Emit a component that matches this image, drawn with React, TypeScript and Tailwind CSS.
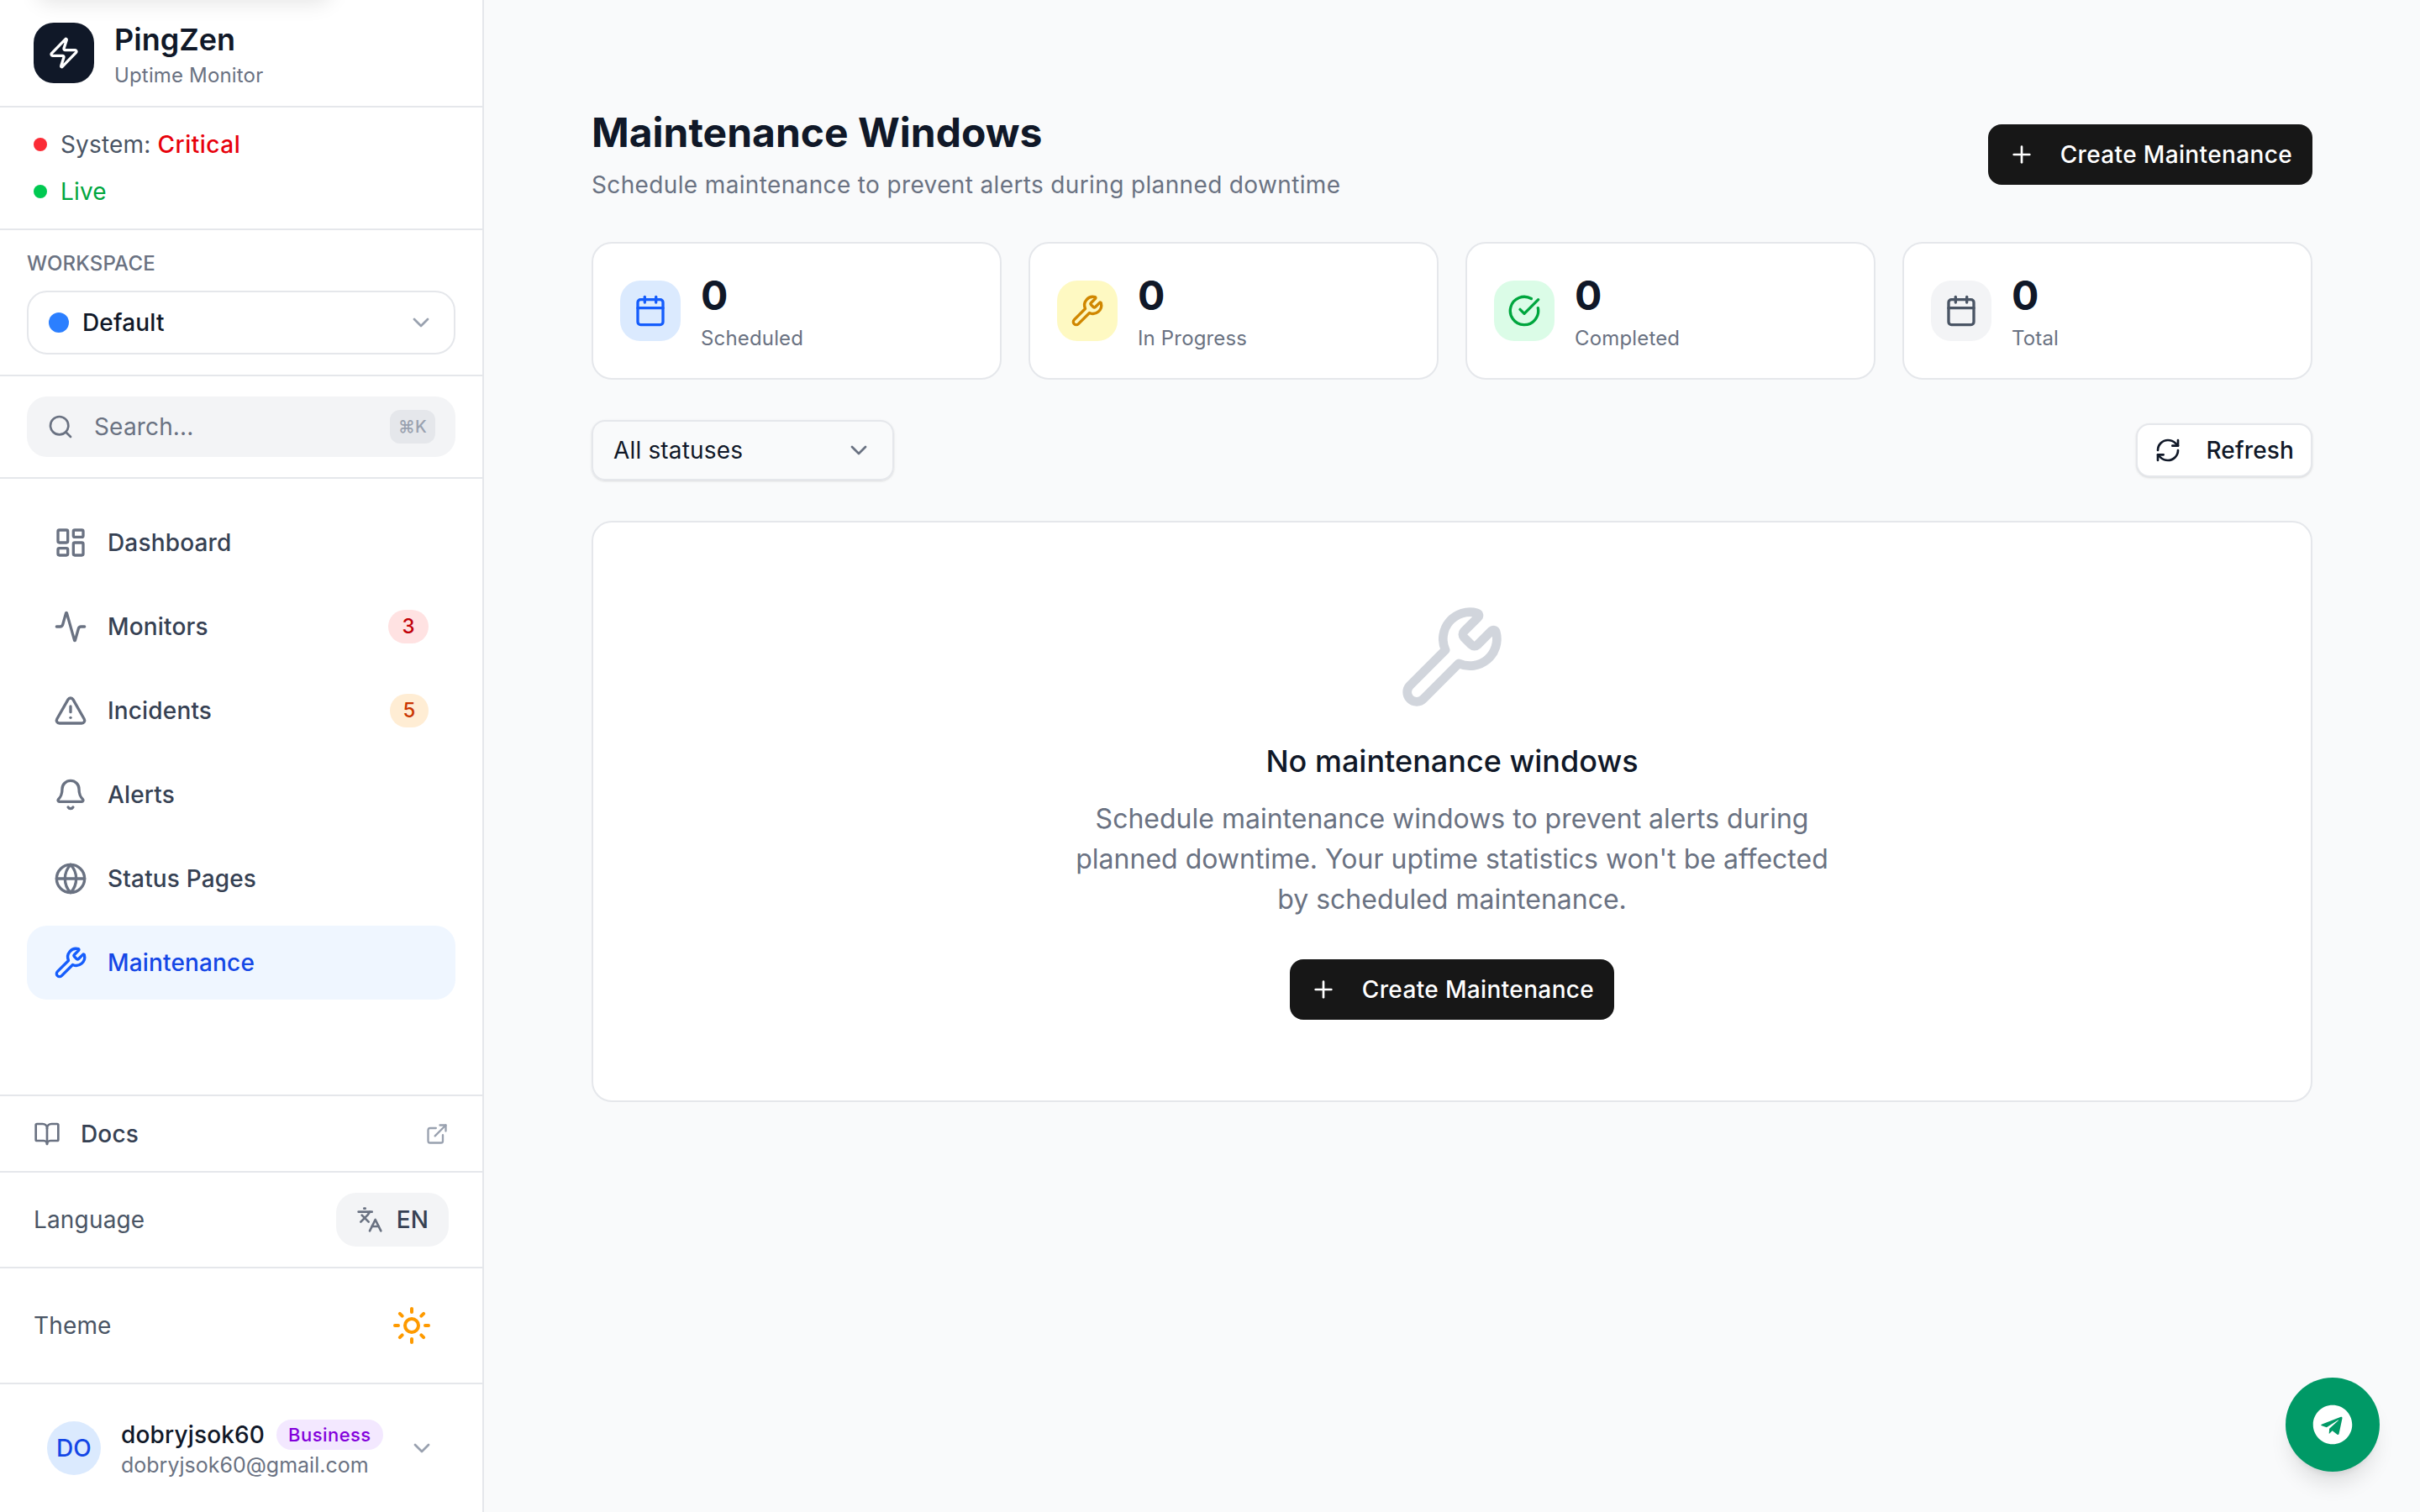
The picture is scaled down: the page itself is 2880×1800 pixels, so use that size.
import {
	Activity,
	Bell,
	BookOpen,
	Calendar,
	CircleCheckBig,
	ChevronDown,
	ExternalLink,
	Globe,
	Languages,
	LayoutDashboard,
	Plus,
	RefreshCw,
	Search,
	Sun,
	TriangleAlert,
	Wrench,
	Zap,
} from "lucide-react"
import { FaTelegram } from "react-icons/fa"

const navItems = [
	{ label: "Dashboard", icon: LayoutDashboard },
	{ label: "Monitors", icon: Activity, badge: "3", badgeClass: "bg-red-100 text-red-700 w-[48px]" },
	{ label: "Incidents", icon: TriangleAlert, badge: "5", badgeClass: "bg-orange-100 text-orange-700 w-[46px]" },
	{ label: "Alerts", icon: Bell },
	{ label: "Status Pages", icon: Globe },
	{ label: "Maintenance", icon: Wrench, active: true },
]

const stats = [
	{ label: "Scheduled", icon: Calendar, boxClass: "bg-blue-100", iconClass: "text-blue-600" },
	{ label: "In Progress", icon: Wrench, boxClass: "bg-yellow-100", iconClass: "text-yellow-600" },
	{ label: "Completed", icon: CircleCheckBig, boxClass: "bg-green-100", iconClass: "text-green-600" },
	{ label: "Total", icon: Calendar, boxClass: "bg-gray-100", iconClass: "text-gray-600" },
]

const CreateButton = () => (
	<button className="flex h-[72px] items-center gap-[30px] rounded-2xl bg-[#171717] px-[24px] text-[28px] font-medium tracking-[0.36px] text-white">
		<Plus className="h-[32px] w-[32px]" />
		Create Maintenance
	</button>
)

const Sidebar = () => (
	<aside className="relative flex h-full w-[576px] shrink-0 flex-col overflow-hidden border-r-2 border-gray-200 bg-white">
		<div className="absolute -top-[44px] left-[44px] h-[44px] w-[350px] rounded-2xl shadow-[0_4px_24px_rgba(0,0,0,0.1)]" />

		<div className="flex h-[128px] shrink-0 items-center gap-[24px] border-b-2 border-gray-200 px-[40px]">
			<div className="flex h-[72px] w-[72px] items-center justify-center rounded-3xl bg-gray-900 text-white">
				<Zap className="h-[40px] w-[40px]" />
			</div>
			<div className="mt-[3px]">
				<div className="text-[36px] leading-[48px] font-semibold tracking-normal text-gray-900">PingZen</div>
				<div className="mt-[3px] text-[24px] leading-[32px] text-gray-500">Uptime Monitor</div>
			</div>
		</div>

		<div className="flex h-[146px] shrink-0 flex-col gap-[16px] border-b-2 border-gray-200 px-[40px] py-[24px] text-[28px] leading-[40px]">
			<div className="flex items-center gap-[16px]">
				<span className="h-[16px] w-[16px] rounded-full bg-red-500" />
				<span className="text-gray-600">
					System: <span className="font-medium tracking-[0.5px] text-red-600">Critical</span>
				</span>
			</div>
			<div className="flex items-center gap-[16px]">
				<span className="h-[16px] w-[16px] rounded-full bg-green-500" />
				<span className="text-green-600">Live</span>
			</div>
		</div>

		<div className="h-[174px] shrink-0 border-b-2 border-gray-200 px-[32px] pt-[24px]">
			<div className="mb-[16px] text-[24px] leading-[32px] font-medium text-gray-500">WORKSPACE</div>
			<div className="flex h-[76px] items-center rounded-3xl border-2 border-gray-200 pr-[23px] pl-[24px]">
				<span className="h-[24px] w-[24px] rounded-full bg-blue-500" />
				<span className="ml-[16px] flex-1 text-[28px] font-medium text-gray-900">Default</span>
				<ChevronDown className="h-[32px] w-[32px] text-gray-400" />
			</div>
		</div>

		<div className="h-[122px] shrink-0 border-b-2 border-gray-200 px-[32px] pt-[24px]">
			<div className="flex h-[72px] items-center rounded-3xl bg-gray-100 pr-[24px] pl-[24px]">
				<Search className="h-[32px] w-[32px] text-gray-500" />
				<span className="ml-[24px] flex-1 text-[28px] text-gray-500">Search...</span>
				<span className="flex h-[40px] w-[54px] items-center justify-center rounded-xl bg-gray-200 text-[20px] font-medium text-gray-400">
					⌘K
				</span>
			</div>
		</div>

		<nav className="flex flex-1 flex-col gap-[12px] px-[32px] pt-[32px]">
			{navItems.map((item) => (
				<div
					key={item.label}
					className={`flex h-[88px] items-center gap-[24px] rounded-3xl pr-[32px] pl-[32px] ${
						item.active ? "bg-blue-50" : ""
					}`}
				>
					<item.icon className={`h-[40px] w-[40px] ${item.active ? "text-blue-600" : "text-gray-500"}`} />
					<span
						className={`flex-1 text-[28px] font-medium ${item.active ? "text-blue-700" : "text-gray-700"}`}
					>
						{item.label}
					</span>
					{item.badge && (
						<span
							className={`flex h-[40px] items-center justify-center rounded-full text-[24px] font-medium ${item.badgeClass}`}
						>
							{item.badge}
						</span>
					)}
				</div>
			))}
		</nav>

		<div className="flex h-[91px] shrink-0 items-center border-t-2 border-gray-200 pr-[40px] pl-[40px]">
			<BookOpen className="h-[32px] w-[32px] text-gray-500" />
			<span className="ml-[24px] flex-1 text-[28px] font-medium text-gray-700">Docs</span>
			<ExternalLink className="h-[28px] w-[28px] text-gray-400" />
		</div>

		<div className="flex h-[114px] shrink-0 items-center justify-between border-t-2 border-gray-200 pr-[40px] pl-[40px]">
			<span className="text-[28px] text-gray-600">Language</span>
			<div className="flex h-[64px] w-[134px] items-center justify-center gap-[16px] rounded-3xl bg-gray-100">
				<Languages className="h-[32px] w-[32px] text-gray-500" />
				<span className="text-[28px] font-medium text-gray-700">EN</span>
			</div>
		</div>

		<div className="flex h-[138px] shrink-0 items-center justify-between border-t-2 border-gray-200 pr-[60px] pl-[40px]">
			<span className="text-[28px] text-gray-600">Theme</span>
			<Sun className="h-[48px] w-[48px] text-amber-500" />
		</div>

		<div className="flex h-[154px] shrink-0 items-center border-t-2 border-gray-200 pr-[56px] pl-[56px]">
			<div className="flex h-[64px] w-[64px] items-center justify-center rounded-full bg-blue-100 text-[28px] font-medium text-blue-700">
				DO
			</div>
			<div className="ml-[24px] flex-1 pt-[4px]">
				<div className="flex h-[36px] items-center gap-[14px]">
					<span className="text-[28px] font-medium text-gray-900">dobryjsok60</span>
					<span className="flex h-[36px] items-center rounded-full bg-purple-100 px-[14px] text-[22px] font-medium tracking-[0.45px] text-purple-700">
						Business
					</span>
				</div>
				<div className="text-[25px] leading-[36px] tracking-normal text-gray-500">dobryjsok60@gmail.com</div>
			</div>
			<ChevronDown className="h-[32px] w-[32px] text-gray-400" />
		</div>
	</aside>
)

const App = () => {
	return (
		<div className="flex h-screen w-full overflow-hidden bg-gray-50 tracking-[0.01em] [font-family:Inter,sans-serif]">
			<Sidebar />

			<main className="flex-1 px-[128px] pt-[126px]">
				<div className="flex items-start justify-between">
					<div>
						<h1 className="text-[48px] leading-[64px] font-bold tracking-normal text-gray-900">
							Maintenance Windows
						</h1>
						<p className="mt-[6px] text-[28px] leading-[48px] tracking-[0.36px] text-gray-500">
							Schedule maintenance to prevent alerts during planned downtime
						</p>
					</div>
					<div className="mt-[22px]">
						<CreateButton />
					</div>
				</div>

				<div className="mt-[44px] grid grid-cols-4 gap-[32px]">
					{stats.map((stat) => (
						<div
							key={stat.label}
							className="flex h-[164px] items-center gap-[24px] rounded-3xl border-2 border-gray-200 bg-white px-[32px]"
						>
							<div className={`flex h-[72px] w-[72px] items-center justify-center rounded-3xl ${stat.boxClass}`}>
								<stat.icon className={`h-[40px] w-[40px] ${stat.iconClass}`} />
							</div>
							<div>
								<div className="text-[48px] leading-[66px] font-bold tracking-normal text-gray-900">0</div>
								<div className="text-[24px] leading-[36px] text-gray-500">{stat.label}</div>
							</div>
						</div>
					))}
				</div>

				<div className="mt-[48px] flex h-[72px] items-center justify-between">
					<div className="flex h-[72px] w-[360px] items-center justify-between rounded-2xl border-2 border-gray-200 pr-[24px] pl-[24px] shadow-sm">
						<span className="text-[28px] text-gray-900">All statuses</span>
						<ChevronDown className="h-[32px] w-[32px] text-gray-500" />
					</div>
					<button className="flex h-[64px] items-center gap-[29px] rounded-2xl border-2 border-gray-200 bg-white px-[20px] text-[28px] font-medium text-gray-900 shadow-sm">
						<RefreshCw className="h-[32px] w-[32px]" />
						Refresh
					</button>
				</div>

				<div className="mt-[48px] flex flex-col items-center rounded-3xl border-2 border-gray-200 bg-white py-[96px]">
					<Wrench className="h-[128px] w-[128px] text-gray-300" />
					<h3 className="mt-[32px] text-[36px] leading-[56px] font-medium tracking-normal text-gray-900">
						No maintenance windows
					</h3>
					<p className="mt-[17px] w-[896px] text-center text-[32px] leading-[48px] tracking-normal text-gray-500">
						Schedule maintenance windows to prevent alerts during planned downtime. Your uptime statistics
						won't be affected by scheduled maintenance.
					</p>
					<div className="mt-[47px]">
						<CreateButton />
					</div>
				</div>
			</main>

			<button className="fixed right-[48px] bottom-[48px] flex h-[112px] w-[112px] items-center justify-center rounded-full bg-emerald-600 text-white shadow-xl">
				<FaTelegram className="h-[48px] w-[48px]" />
			</button>
		</div>
	)
}

export default App
